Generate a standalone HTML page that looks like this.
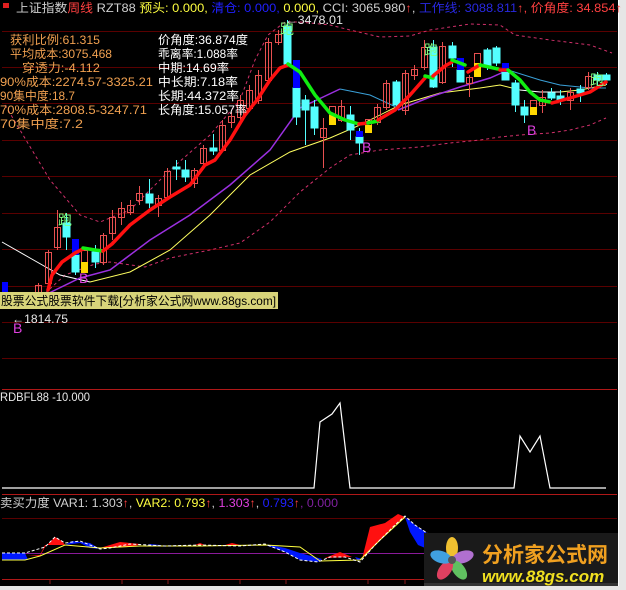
<!DOCTYPE html>
<html><head><meta charset="utf-8"><style>
html,body{margin:0;padding:0;background:#e8e8e8;width:626px;height:590px;overflow:hidden}
svg{display:block}
text{font-family:"Liberation Sans","Noto Sans CJK SC",sans-serif;font-size:12px}
</style></head><body>
<svg width="626" height="590" viewBox="0 0 626 590" xmlns="http://www.w3.org/2000/svg">
<rect x="0" y="0" width="626" height="590" fill="#e6e6e6"/>
<rect x="0" y="0" width="618" height="586" fill="#000"/>
<line x1="618.5" y1="0" x2="618.5" y2="586" stroke="#fff"/>
<g stroke="#5a0000" stroke-width="1">
<line x1="2" y1="31.5" x2="617" y2="31.5"/><line x1="2" y1="67.5" x2="617" y2="67.5"/>
<line x1="2" y1="103.5" x2="617" y2="103.5"/><line x1="2" y1="140.5" x2="617" y2="140.5"/>
<line x1="2" y1="176.5" x2="617" y2="176.5"/><line x1="2" y1="213.5" x2="617" y2="213.5"/>
<line x1="2" y1="249.5" x2="617" y2="249.5"/><line x1="2" y1="286.5" x2="617" y2="286.5"/>
<line x1="2" y1="322.5" x2="617" y2="322.5"/><line x1="2" y1="358.5" x2="617" y2="358.5"/>
<line x1="2" y1="518.5" x2="617" y2="518.5"/>
</g>
<g stroke="#b01818" stroke-width="1">
<line x1="2" y1="389.5" x2="617" y2="389.5"/>
<line x1="2" y1="494.5" x2="617" y2="494.5"/>
<line x1="2" y1="579.5" x2="617" y2="579.5"/>
</g>
<line x1="2" y1="553.5" x2="617" y2="553.5" stroke="#8a1a9a"/>
<polyline fill="none" stroke="#d0306a" stroke-dasharray="3,3" points="5,105 20,130 50,180 80,215 100,222 130,210 170,170 210,135 240,100 255,60 268,35 285,22 300,22 330,25 350,30 380,37 410,36 430,30 470,24 500,25 515,35 550,40 590,45 612,53"/>
<polyline fill="none" stroke="#d0306a" stroke-dasharray="3,3" points="2,297 20,305 40,298 65,275 95,264 110,262 145,267 170,258 210,250 240,243 270,222 300,192 330,168 350,155 380,150 420,147 450,143 480,140 500,137 520,135 550,133 570,130 590,125 606,118"/>
<polyline fill="none" stroke="#ffffff" stroke-width="1" points="2,242 30,258 60,275 90,282"/>
<polyline fill="none" stroke="#ffff60" stroke-width="1" points="90,282 130,272 170,250 210,215 250,175 290,152 330,138 360,125 400,105 440,93 480,88 500,85 520,90"/>
<polyline fill="none" stroke="#ffffff" stroke-width="1" points="520,90 540,92 560,92"/>
<polyline fill="none" stroke="#ffff60" stroke-width="1" points="560,92 580,90 606,85"/>
<polyline fill="none" stroke="#9b30e0" stroke-width="1.5" points="45,295 80,278 110,270 150,240 190,215 230,185 270,150 300,108 340,89"/>
<polyline fill="none" stroke="#3aa0d8" stroke-width="1" points="340,89 370,95 398,108"/>
<polyline fill="none" stroke="#9b30e0" stroke-width="1.5" points="398,110 430,97 460,87 490,78 508,70"/>
<polyline fill="none" stroke="#3aa0d8" stroke-width="1" points="508,70 540,80 560,85 590,88 606,88"/>
<g stroke-width="1">
<g stroke="#e85050" fill="none">
<line x1="38.5" y1="283" x2="38.5" y2="295"/><rect x="35.5" y="285.5" width="6" height="7"/>
<line x1="48.5" y1="250" x2="48.5" y2="290"/><rect x="45.5" y="252.5" width="6" height="31"/>
<line x1="57.5" y1="210" x2="57.5" y2="250"/><rect x="54.5" y="227.5" width="6" height="20"/>
<rect x="81.5" y="250.5" width="6" height="12"/>
<line x1="103.5" y1="233" x2="103.5" y2="265"/><rect x="100.5" y="235.5" width="6" height="27"/>
<line x1="112.5" y1="210" x2="112.5" y2="240"/><rect x="109.5" y="217.5" width="6" height="16"/>
<line x1="121.5" y1="202" x2="121.5" y2="225"/><rect x="118.5" y="208.5" width="6" height="9"/>
<line x1="130.5" y1="200" x2="130.5" y2="215"/><rect x="127.5" y="205.5" width="6" height="7"/>
<line x1="139.5" y1="186" x2="139.5" y2="205"/><rect x="136.5" y="193.5" width="6" height="7"/>
<line x1="158.5" y1="195" x2="158.5" y2="217"/><rect x="155.5" y="198.5" width="6" height="7"/>
<line x1="167.5" y1="168" x2="167.5" y2="200"/><rect x="164.5" y="171.5" width="6" height="26"/>
<line x1="194.5" y1="168" x2="194.5" y2="188"/><rect x="191.5" y="170.5" width="6" height="13"/>
<line x1="203.5" y1="145" x2="203.5" y2="168"/><rect x="200.5" y="148.5" width="6" height="15"/>
<line x1="222.5" y1="120" x2="222.5" y2="152"/><rect x="219.5" y="125.5" width="6" height="25"/>
<line x1="231.5" y1="112" x2="231.5" y2="128"/><rect x="228.5" y="116.5" width="6" height="6"/>
<line x1="240.5" y1="95" x2="240.5" y2="120"/><rect x="237.5" y="100.5" width="6" height="17"/>
<line x1="249.5" y1="85" x2="249.5" y2="112"/><rect x="246.5" y="90.5" width="6" height="18"/>
<line x1="258.5" y1="70" x2="258.5" y2="104"/><rect x="255.5" y="75.5" width="6" height="25"/>
<line x1="268.5" y1="38" x2="268.5" y2="85"/><rect x="265.5" y="42.5" width="6" height="38"/>
<line x1="278.5" y1="30" x2="278.5" y2="45"/><rect x="275.5" y="34.5" width="6" height="8"/>
<line x1="323.5" y1="118" x2="323.5" y2="168"/><rect x="320.5" y="128.5" width="6" height="9"/>
<rect x="329.5" y="106.5" width="6" height="9"/>
<line x1="341.5" y1="100" x2="341.5" y2="122"/><rect x="338.5" y="106.5" width="6" height="14"/>
<rect x="365.5" y="119.5" width="6" height="6"/>
<line x1="377.5" y1="104" x2="377.5" y2="125"/><rect x="374.5" y="107.5" width="6" height="15"/>
<line x1="386.5" y1="80" x2="386.5" y2="110"/><rect x="383.5" y="83.5" width="6" height="24"/>
<line x1="405.5" y1="70" x2="405.5" y2="115"/><rect x="402.5" y="73.5" width="6" height="37"/>
<line x1="414.5" y1="65" x2="414.5" y2="80"/><rect x="411.5" y="69.5" width="6" height="6"/>
<line x1="424.5" y1="40" x2="424.5" y2="70"/><rect x="421.5" y="47.5" width="6" height="20"/>
<line x1="442.5" y1="42" x2="442.5" y2="84"/><rect x="439.5" y="46.5" width="6" height="36"/>
<line x1="469.5" y1="75" x2="469.5" y2="97"/><rect x="466.5" y="77.5" width="6" height="6"/>
<rect x="474.5" y="53.5" width="6" height="10"/>
<rect x="530.5" y="100.5" width="6" height="7"/>
<line x1="542.5" y1="90" x2="542.5" y2="113"/><rect x="539.5" y="97.5" width="6" height="8"/>
<line x1="570.5" y1="88" x2="570.5" y2="110"/><rect x="567.5" y="92.5" width="6" height="8"/>
<line x1="588.5" y1="72" x2="588.5" y2="90"/><rect x="585.5" y="76.5" width="6" height="11"/>
</g>
<g stroke="#54ffff" fill="#54ffff">
<line x1="66.5" y1="213" x2="66.5" y2="250"/><rect x="63" y="223" width="7" height="14"/>
<line x1="75.5" y1="255" x2="75.5" y2="275"/><rect x="72" y="255" width="7" height="17"/>
<line x1="95.5" y1="245" x2="95.5" y2="268"/><rect x="92" y="252" width="7" height="10"/>
<line x1="149.5" y1="179" x2="149.5" y2="208"/><rect x="146" y="194" width="7" height="9"/>
<line x1="176.5" y1="160" x2="176.5" y2="180"/><rect x="173" y="167" width="7" height="2"/>
<line x1="185.5" y1="160" x2="185.5" y2="182"/><rect x="182" y="170" width="7" height="7"/>
<line x1="213.5" y1="134" x2="213.5" y2="155"/><rect x="210" y="148" width="7" height="3"/>
<line x1="287.5" y1="20" x2="287.5" y2="66"/><rect x="284" y="26" width="7" height="38"/>
<line x1="296.5" y1="88" x2="296.5" y2="125"/><rect x="293" y="88" width="7" height="29"/>
<line x1="305.5" y1="95" x2="305.5" y2="145"/><rect x="302" y="100" width="7" height="10"/>
<line x1="314.5" y1="100" x2="314.5" y2="135"/><rect x="311" y="107" width="7" height="21"/>
<line x1="350.5" y1="106" x2="350.5" y2="140"/><rect x="347" y="115" width="7" height="15"/>
<line x1="359.5" y1="128" x2="359.5" y2="155"/><rect x="356" y="137" width="7" height="6"/>
<line x1="396.5" y1="80" x2="396.5" y2="110"/><rect x="393" y="82" width="7" height="23"/>
<line x1="433.5" y1="40" x2="433.5" y2="88"/><rect x="430" y="47" width="7" height="40"/>
<line x1="452.5" y1="42" x2="452.5" y2="67"/><rect x="449" y="46" width="7" height="12"/>
<rect x="457" y="70" width="7" height="12"/>
<line x1="487.5" y1="48" x2="487.5" y2="70"/><rect x="484" y="50" width="7" height="17"/>
<line x1="496.5" y1="46" x2="496.5" y2="66"/><rect x="493" y="48" width="7" height="15"/>
<rect x="502" y="72" width="7" height="8"/>
<line x1="515.5" y1="80" x2="515.5" y2="112"/><rect x="512" y="83" width="7" height="22"/>
<line x1="524.5" y1="100" x2="524.5" y2="123"/><rect x="521" y="107" width="7" height="8"/>
<line x1="551.5" y1="88" x2="551.5" y2="100"/><rect x="548" y="93" width="7" height="5"/>
<line x1="560.5" y1="90" x2="560.5" y2="105"/><rect x="557" y="96" width="7" height="4"/>
<line x1="580.5" y1="85" x2="580.5" y2="102"/><rect x="577" y="89" width="7" height="4"/>
<line x1="597.5" y1="72" x2="597.5" y2="88"/><rect x="594" y="75" width="7" height="5"/>
<line x1="606.5" y1="73" x2="606.5" y2="85"/><rect x="603" y="75" width="7" height="5"/>
</g>
<g fill="#0000ff">
<rect x="2" y="282" width="6" height="18"/>
<rect x="72" y="239" width="7" height="16"/>
<rect x="293" y="60" width="7" height="28"/>
<rect x="356" y="131" width="7" height="6"/>
<rect x="457" y="58" width="7" height="12"/>
<rect x="502" y="63" width="7" height="9"/>
</g>
<g fill="#ffd800">
<rect x="81" y="262" width="7" height="11"/>
<rect x="329" y="115" width="7" height="10"/>
<rect x="365" y="125" width="7" height="8"/>
<rect x="474" y="63" width="7" height="14"/>
<rect x="530" y="107" width="7" height="8"/>
</g>
</g>
<g fill="none" stroke-width="3.5" stroke-linejoin="round" stroke-linecap="round">
<polyline stroke="#ff1010" points="48,290 52,275 62,262 75,253 83,249"/>
<polyline stroke="#10ee10" points="83,248 95,250 103,251"/>
<polyline stroke="#ff1010" points="103,251 112,244 130,225 150,210 170,197 190,185 205,165 215,160 230,140 245,115 257,100 270,80 280,68 288,65"/>
<polyline stroke="#10ee10" points="288,64 300,72 315,95 330,113 345,120 359,124"/>
<polyline stroke="#ff1010" points="359,124 368,123"/>
<polyline stroke="#10ee10" points="368,123 378,121"/>
<polyline stroke="#ff1010" points="378,120 395,110 410,95 425,78"/>
<polyline stroke="#10ee10" points="425,76 433,78"/>
<polyline stroke="#ff1010" points="433,76 445,66 452,62"/>
<polyline stroke="#10ee10" points="452,60 465,65"/>
<polyline stroke="#ff1010" points="468,72 478,66"/>
<polyline stroke="#10ee10" points="480,65 498,69"/>
<polyline stroke="#ff1010" points="500,70 508,70"/>
<polyline stroke="#10ee10" points="508,70 520,80 530,92 540,100 550,102"/>
<polyline stroke="#ff1010" points="552,103 570,98 590,92 606,82"/>
</g>
<g fill="#80ff80"><text x="280" y="34" style="font-size:14px">跑</text><text x="424" y="55" style="font-size:14px">跑</text><text x="58" y="225" style="font-size:14px">跑</text><text x="590" y="85" style="font-size:14px">跑</text></g>
<g fill="#e040e0"><text x="362" y="152" style="font-size:14px">B</text><text x="527" y="135" style="font-size:14px">B</text><text x="79" y="283" style="font-size:14px">B</text><text x="13" y="333" style="font-size:14px">B</text></g>
<text x="285" y="24" fill="#e8e8e8" textLength="58" lengthAdjust="spacingAndGlyphs">←3478.01</text>
<text x="12" y="323" fill="#e8e8e8" textLength="56" lengthAdjust="spacingAndGlyphs">←1814.75</text>
<rect x="3" y="3" width="6" height="5" fill="#e02020"/>
<text x="16" y="12" textLength="606" lengthAdjust="spacingAndGlyphs"><tspan fill="#d0d0d0">上证指数</tspan><tspan fill="#ff4040">周线</tspan><tspan fill="#d0d0d0"> RZT88 </tspan><tspan fill="#ffff40"> 预头: 0.000,</tspan><tspan fill="#2020ff"> 清仓: 0.000,</tspan><tspan fill="#ffff40"> 0.000,</tspan><tspan fill="#d0d0d0"> CCI: 3065.980</tspan><tspan fill="#ff4040">↑</tspan><tspan fill="#d0d0d0">,</tspan><tspan fill="#2828e0"> 工作线: 3088.811</tspan><tspan fill="#ff4040">↑, 价角度: 34.854↑</tspan></text>
<g fill="#f0a050">
<text x="10" y="44" textLength="90" lengthAdjust="spacingAndGlyphs">获利比例:61.315</text>
<text x="10" y="58" textLength="102" lengthAdjust="spacingAndGlyphs">平均成本:3075.468</text>
<text x="22" y="72" textLength="78" lengthAdjust="spacingAndGlyphs">穿透力:-4.112</text>
<text x="0" y="86" textLength="153" lengthAdjust="spacingAndGlyphs">90%成本:2274.57-3325.21</text>
<text x="0" y="100" textLength="75" lengthAdjust="spacingAndGlyphs">90集中度:18.7</text>
<text x="0" y="114" textLength="147" lengthAdjust="spacingAndGlyphs">70%成本:2808.5-3247.71</text>
<text x="0" y="128" textLength="83" lengthAdjust="spacingAndGlyphs">70集中度:7.2</text>
</g>
<g fill="#ffffff">
<text x="158" y="44" textLength="90" lengthAdjust="spacingAndGlyphs">价角度:36.874度</text>
<text x="158" y="58" textLength="80" lengthAdjust="spacingAndGlyphs">乖离率:1.088率</text>
<text x="158" y="72" textLength="71" lengthAdjust="spacingAndGlyphs">中期:14.69率</text>
<text x="158" y="86" textLength="80" lengthAdjust="spacingAndGlyphs">中长期:7.18率</text>
<text x="158" y="100" textLength="81" lengthAdjust="spacingAndGlyphs">长期:44.372率</text>
<text x="158" y="114" textLength="89" lengthAdjust="spacingAndGlyphs">长角度:15.057率</text>
</g>
<rect x="0" y="292" width="278" height="17" fill="#d8d47a"/>
<text x="1" y="305" fill="#000" textLength="275" lengthAdjust="spacingAndGlyphs">股票公式股票软件下载[分析家公式网www.88gs.com]</text>
<text x="0" y="401" fill="#e8e8e8" textLength="90" lengthAdjust="spacingAndGlyphs">RDBFL88  -10.000</text>
<polyline fill="none" stroke="#fff" stroke-width="1.2" points="2,488 314,488 320,422 332,414 340,403 350,488 514,488 520,436 530,452 540,436 550,488 606,488"/>
<text x="0" y="507" textLength="338" lengthAdjust="spacingAndGlyphs"><tspan fill="#d0d0d0">卖买力度 VAR1: 1.303</tspan><tspan fill="#ff4040">↑</tspan><tspan fill="#d0d0d0">,</tspan><tspan fill="#ffff40"> VAR2: 0.793</tspan><tspan fill="#ff4040">↑</tspan><tspan fill="#d0d0d0">,</tspan><tspan fill="#e040e0"> 1.303</tspan><tspan fill="#ff4040">↑</tspan><tspan fill="#d0d0d0">,</tspan><tspan fill="#2020ff"> 0.793</tspan><tspan fill="#ff4040">↑</tspan><tspan fill="#8020a0">, 0.000</tspan></text>
<g>
<polygon fill="#0018ff" points="2,553 25,553 28,560 2,560"/>
<polygon fill="#ff1010" points="28,555 40,556 45,547 55,537 62,541 65,545 45,545 40,555"/>
<polygon fill="#0018ff" points="65,545 80,543 90,548 100,549 90,543 72,541"/>
<polygon fill="#ff1010" points="100,548 110,545 120,542 140,544 135,546 110,548"/>
<polygon fill="#0018ff" points="145,546 160,546 160,545 150,544"/>
<polygon fill="#ff1010" points="195,545 205,545 200,543"/>
<polygon fill="#ff1010" points="225,545 240,545 232,543"/>
<polygon fill="#0018ff" points="265,545 285,552 300,560 318,562 322,559 300,553 285,548 270,545"/>
<polygon fill="#ff1010" points="325,558 340,552 352,557"/>
<polygon fill="#0018ff" points="355,557 362,559 358,561"/>
<polygon fill="#ff1010" points="362,559 370,527 385,523 398,514 405,517 395,525 380,540"/>
<polygon fill="#0018ff" points="405,517 415,525 430,535 440,548 430,550 418,545 410,532"/>
<polyline fill="none" stroke="#ffff40" points="2,560 25,560 40,556 65,545 100,548 140,546 200,546 265,545 300,547 320,561 360,560 380,540 405,517"/>
<polyline fill="none" stroke="#fff" stroke-dasharray="3,2" points="2,553 25,553 45,547 55,537 65,543 80,541 100,549 110,548 130,544 165,546 200,545 240,546 265,544 285,552 300,560 318,562 330,557 345,557 360,562 375,545 395,525 405,516 415,525 430,535 440,548"/>
</g>
<g stroke="#8a1a1a"><line x1="50" y1="580" x2="50" y2="584"/><line x1="122" y1="580" x2="122" y2="584"/><line x1="168" y1="580" x2="168" y2="584"/><line x1="240" y1="580" x2="240" y2="584"/><line x1="286" y1="580" x2="286" y2="584"/><line x1="368" y1="580" x2="368" y2="584"/><line x1="405" y1="580" x2="405" y2="584"/></g>
<rect x="424" y="533" width="194" height="52" fill="#1a1a1a"/>
<rect x="424" y="583" width="194" height="3" fill="#333"/>
<g transform="translate(452,560)">
<ellipse cx="0" cy="-12" rx="6" ry="11" fill="#f0c030"/>
<ellipse cx="11" cy="-3" rx="6" ry="11" transform="rotate(72 11 -3)" fill="#b070d0"/>
<ellipse cx="7" cy="10" rx="6" ry="11" transform="rotate(144 7 10)" fill="#60c060"/>
<ellipse cx="-7" cy="10" rx="6" ry="11" transform="rotate(216 -7 10)" fill="#e04060"/>
<ellipse cx="-11" cy="-3" rx="6" ry="11" transform="rotate(288 -11 -3)" fill="#40a0e0"/>
<circle cx="0" cy="0" r="4" fill="#555"/>
</g>
<text x="482" y="562" fill="#f0a020" style="font-size:21px;font-weight:bold">分析家公式网</text>
<text x="482" y="582" fill="#f0e020" style="font-size:17px;font-weight:bold;font-style:italic">www.88gs.com</text>
</svg>
</body></html>
